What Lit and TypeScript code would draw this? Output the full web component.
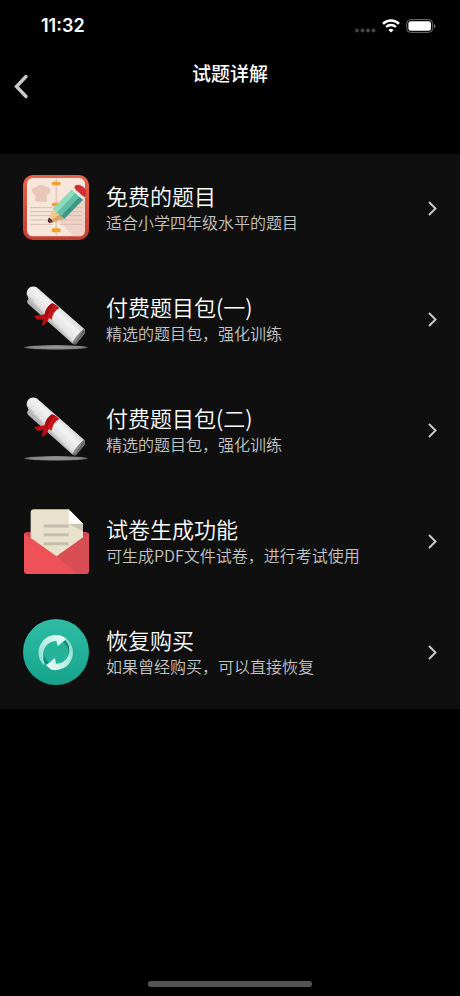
import { LitElement, html, css, svg, TemplateResult } from "lit";
import { customElement } from "lit/decorators.js";

const notebook = svg`
  <defs>
    <linearGradient id="cover" x1="0" y1="0" x2="0" y2="1">
      <stop offset="0" stop-color="#e8644a" /><stop offset="1" stop-color="#c63c32" />
    </linearGradient>
    <clipPath id="pages"><rect x="33" y="30" width="174" height="175" rx="17" /></clipPath>
  </defs>
  <rect x="21" y="21" width="198" height="195" rx="30" fill="url(#cover)" />
  <rect x="33" y="30" width="174" height="175" rx="17" fill="#f8e6da" />
  <g clip-path="url(#pages)">
    <path d="M130 160L210 78V210H178Z" fill="#e3bdb0" opacity=".5" />
    <path d="M120 30V205" stroke="#c5a79c" stroke-width="3" />
    <path d="M117 30V205" stroke="#fff6ef" stroke-width="2" />
  </g>
  <path d="M58 101V80C43 77 46 54 62 57C67 48 84 48 89 57C106 54 108 77 93 80V101Z" fill="#e8c6b8" />
  <path d="M42 119H110M42 131H110M42 143H104M42 156H110M42 169H110M132 169H198M132 156H198M156 143H198M170 131H198M180 119H198"
    stroke="#d3bbb2" stroke-width="3" />
  <g fill="#f0a02c">
    <rect x="107" y="41" width="27" height="11" rx="5" />
    <rect x="107" y="104" width="24" height="11" rx="5" />
    <rect x="107" y="181" width="27" height="12" rx="5" />
  </g>
  <path d="M111 122L145 152L107 164L96 161L98 153Z" fill="#efc98f" />
  <path d="M130 139L145 152L107 164L102 161Z" fill="#d9a566" />
  <path d="M98 149Q108 152 110 162L101 165Q95 164 95 159Z" fill="#57303a" />
  <path d="M167 65L201 95L145 152Q139 144 132 145Q131 136 122 136Q121 126 111 122Z" fill="#63bfa4" />
  <path d="M167 65L178 75L122 135Q119 126 111 122Z" fill="#8ddcc0" />
  <path d="M191 86L201 95L145 152Q141 146 135 145Z" fill="#3d9583" />
  <path d="M167 65L175 57L208 87L201 95Z" fill="#e9e7df" />
  <path d="M175 59Q175 50 187 50Q208 54 211 73Q212 84 206 88Q194 80 188 73Q180 68 175 59Z" fill="#d42f35" />
`;

const diploma = svg`
  <defs>
    <linearGradient id="roll" gradientUnits="userSpaceOnUse" x1="128" y1="72" x2="88" y2="112">
      <stop offset="0" stop-color="#d8d8d8" /><stop offset=".35" stop-color="#f2f2f2" />
      <stop offset=".8" stop-color="#e2e2e2" /><stop offset="1" stop-color="#b5b5b5" />
    </linearGradient>
    <radialGradient id="ground">
      <stop offset="0" stop-color="#999" /><stop offset=".8" stop-color="#858585" /><stop offset="1" stop-color="#555" />
    </radialGradient>
  </defs>
  <ellipse cx="120" cy="202" rx="96" ry="7" fill="url(#ground)" />
  <path d="M32 43Q31 28 43 21Q53 17 62 22L205 147Q209 154 204 163L180 192Q172 195 165 187L36 71Q30 63 38 57Z" fill="url(#roll)" />
  <path d="M33 45L54 65M38 57L76 94" stroke="#a8a8a8" stroke-width="2" fill="none" />
  <path d="M203 147Q210 153 204 163L180 192Q174 195 169 190Q184 163 203 147Z" fill="#666" />
  <path d="M202 151L179 187L170 188Q182 164 202 151Z" fill="#8b8b8b" />
  <path d="M86 103L54 108L63 119L82 118L77 137L90 131L102 108Z" fill="#b90c12" />
  <path d="M108 70Q121 74 130 84Q111 94 107 119Q94 114 86 103Q90 81 108 70Z" fill="#c81318" />
  <path d="M108 70Q113 71 117 74Q99 88 94 111Q88 107 86 103Q90 81 108 70Z" fill="#a50b10" />
`;

const envelope = svg`
  <path d="M24 98Q24 92 31 90L122 90L212 90Q219 92 219 99V205Q219 216 208 216H35Q24 216 24 205Z" fill="#c94650" />
  <path d="M44 32Q44 22 54 22H158L201 65V150L122 190L44 150Z" fill="#e8e1cc" />
  <path d="M158 65H201V88Z" fill="#cbc6b2" />
  <path d="M158 22L201 65H166Q158 65 158 57Z" fill="#fff" />
  <path d="M83 72H158M83 98H158M83 125H158" stroke="#c4bdad" stroke-width="9" />
  <path d="M24 94L122 163L219 94V205Q219 216 208 216H35Q24 216 24 205Z" fill="#ee5158" />
  <path d="M219 94V205Q219 216 208 216H183L122 163Z" fill="#d94e55" />
`;

const restore = svg`
  <defs>
    <linearGradient id="disc" x1="0" y1="0" x2="0" y2="1">
      <stop offset="0" stop-color="#2fbda5" /><stop offset="1" stop-color="#16a38c" />
    </linearGradient>
    <linearGradient id="arrowUp" x1="0" y1="1" x2="1" y2="0">
      <stop offset="0" stop-color="#8ddccf" /><stop offset="1" stop-color="#effffb" />
    </linearGradient>
    <linearGradient id="arrowDown" x1="0" y1="1" x2="1" y2="0">
      <stop offset="0" stop-color="#effffb" /><stop offset="1" stop-color="#82d8c9" />
    </linearGradient>
  </defs>
  <circle cx="120" cy="120" r="99" fill="url(#disc)" />
  <circle cx="120" cy="121" r="45" fill="#118b79" />
  <circle cx="121" cy="122" r="37" fill="#25b39b" />
  <path d="M83 159A53 53 0 0 1 136 71L152 80L125 103L121 87A39 39 0 0 0 82 128Q80 144 86 157Z" fill="url(#arrowUp)" />
  <path d="M151 80A53 53 0 0 1 106 173L90 160L117 138L120 155A40 40 0 0 0 160 114Q160 96 148 84Z" fill="url(#arrowDown)" />
`;

interface Entry {
  title: string;
  note: string;
  art: TemplateResult<2>;
  box: string;
}

const entries: Entry[] = [
  { title: "免费的题目", note: "适合小学四年级水平的题目", art: notebook, box: "21 21 198 198" },
  { title: "付费题目包(一)", note: "精选的题目包，强化训练", art: diploma, box: "21 18 198 198" },
  { title: "付费题目包(二)", note: "精选的题目包，强化训练", art: diploma, box: "21 18 198 198" },
  { title: "试卷生成功能", note: "可生成PDF文件试卷，进行考试使用", art: envelope, box: "21 18 198 198" },
  { title: "恢复购买", note: "如果曾经购买，可以直接恢复", art: restore, box: "21 21 198 198" },
];

@customElement("status-bar")
class StatusBar extends LitElement {
  static styles = css`
    :host {
      display: flex;
      align-items: center;
      justify-content: space-between;
      height: 52px;
      padding: 0 24px 0 41px;
      color: #fff;
      font: 600 18px/20px Inter, "Liberation Sans", sans-serif;
    }
    .signals {
      display: flex;
      align-items: center;
      gap: 6px;
    }
    svg {
      display: block;
    }
  `;

  render() {
    return html`
      <time>11:32</time>
      <div class="signals">
        <svg width="21" height="14" viewBox="0 0 21 14" fill="#434345" aria-hidden="true">
          <circle cx="2" cy="11.5" r="2" /><circle cx="7.5" cy="11.5" r="2" />
          <circle cx="13" cy="11.5" r="2" /><circle cx="18.5" cy="11.5" r="2" />
        </svg>
        <svg width="18" height="14" viewBox="0 0 18 14" fill="none" stroke="#fff" aria-hidden="true">
          <path d="M1 4.9A11.4 11.4 0 0 1 17 4.9" stroke-width="2.5" />
          <path d="M4 8A7.2 7.2 0 0 1 14 8" stroke-width="2.4" />
          <path d="M9 13.6L6.4 11A3.8 3.8 0 0 1 11.6 11Z" fill="#fff" stroke="none" />
        </svg>
        <svg width="30" height="14" viewBox="0 0 30 14" aria-hidden="true">
          <rect x=".7" y=".6" width="26" height="12.8" rx="4" fill="none" stroke="#707070" />
          <rect x="2.4" y="2.2" width="22.6" height="9.6" rx="2.4" fill="#fff" />
          <path d="M28 5Q29.6 5.6 29.6 7T28 9Z" fill="#707070" />
        </svg>
      </div>
    `;
  }
}

@customElement("app-root")
class AppRoot extends LitElement {
  static styles = css`
    :host {
      display: flex;
      flex-direction: column;
      min-height: 100vh;
      background: #000;
      color: #fff;
      font-family: "Noto Sans CJK SC", sans-serif;
    }
    button {
      border: 0;
      margin: 0;
      padding: 0;
      background: none;
      color: inherit;
      font: inherit;
      text-align: left;
      cursor: pointer;
    }
    svg {
      display: block;
      flex: none;
    }
    .nav {
      display: grid;
      grid-template-columns: 48px 1fr 48px;
      height: 102px;
      align-items: start;
    }
    .back {
      padding: 20px 12px;
    }
    h1 {
      margin: 0;
      padding-top: 7px;
      font-size: 19px;
      line-height: 28px;
      font-weight: 500;
      text-align: center;
    }
    .list {
      list-style: none;
      margin: 0;
      padding: 0;
      background: #0f0f0f;
      font-weight: 350;
    }
    .row {
      display: flex;
      align-items: center;
      gap: 17px;
      width: 100%;
      padding: 21px 20px 24px 23px;
    }
    .text {
      display: flex;
      flex-direction: column;
      flex: 1;
      min-width: 0;
    }
    .title {
      font-size: 22px;
      line-height: 28px;
    }
    .note {
      font-size: 16px;
      line-height: 26px;
      color: #c4c4c4;
    }
    .home {
      width: 164px;
      height: 6px;
      margin: auto auto 9px;
      border-radius: 3px;
      background: #555;
    }
  `;

  render() {
    return html`
      <status-bar></status-bar>
      <header class="nav">
        <button class="back" aria-label="返回">
          <svg width="20" height="28" viewBox="0 0 20 28" fill="none" stroke="#c8c8c8" stroke-width="3.4" stroke-linecap="round" aria-hidden="true">
            <path d="M14 4.5L4.5 14.5L14 24.5" />
          </svg>
        </button>
        <h1>试题详解</h1>
      </header>
      <ul class="list">
        ${entries.map(
          (e) => html`
            <li>
              <button class="row">
                <svg width="66" height="66" viewBox=${e.box} aria-hidden="true">${e.art}</svg>
                <span class="text">
                  <span class="title">${e.title}</span>
                  <span class="note">${e.note}</span>
                </span>
                <svg width="14" height="20" viewBox="0 0 14 20" fill="none" stroke="#c8c8c8" stroke-width="2" aria-hidden="true">
                  <path d="M3 4L9.5 10.5L3 17" />
                </svg>
              </button>
            </li>
          `
        )}
      </ul>
      <div class="home"></div>
    `;
  }
}
